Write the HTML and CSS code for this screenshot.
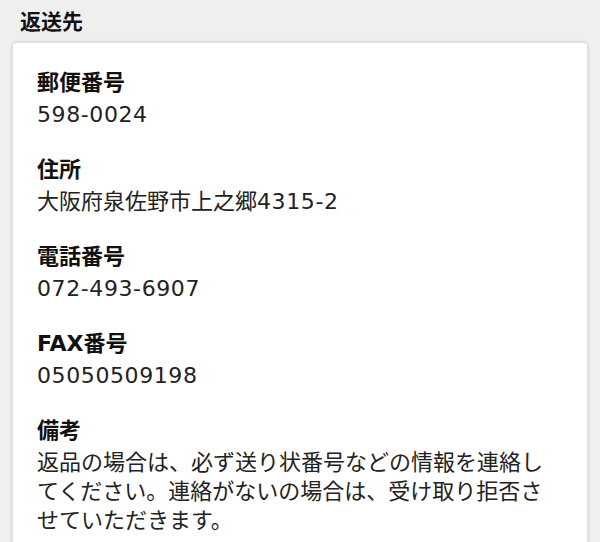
FILE: index.html
```html
<!DOCTYPE html>
<html lang="ja">
<head>
<meta charset="utf-8">
<link rel="stylesheet" href="styles.css">
</head>
<body>
<h2 class="title">返送先</h2>
<div class="card">
  <div class="item">
    <div class="label">郵便番号</div>
    <div class="value num">598-0024</div>
  </div>
  <div class="item">
    <div class="label">住所</div>
    <div class="value">大阪府泉佐野市上之郷<span class="num">4315-2</span></div>
  </div>
  <div class="item">
    <div class="label">電話番号</div>
    <div class="value num">072-493-6907</div>
  </div>
  <div class="item">
    <div class="label">FAX番号</div>
    <div class="value num">05050509198</div>
  </div>
  <div class="item">
    <div class="label">備考</div>
    <div class="value">返品の場合は、必ず送り状番号などの情報を連絡してください。連絡がないの場合は、受け取り拒否させていただきます。</div>
  </div>
</div>
</body>
</html>
```
FILE: styles.css
```css
html, body {
  margin: 0;
  padding: 0;
  background: #efefef;
  height: 100%;
  overflow: hidden;
}
body {
  font-family: "DejaVu Sans", "Noto Sans CJK JP", sans-serif;
  color: #111;
}
.title {
  margin: 0;
  padding: 8px 20px 0;
  font-size: 21px;
  font-weight: 700;
  line-height: 28px;
  height: 35px;
  color: #111;
}
.card {
  margin: 0 13px;
  background: #fff;
  border-radius: 4px;
  box-shadow: 0 0 4px rgba(0, 0, 0, 0.18);
  padding: 24px 24px 40px;
  display: flex;
  flex-direction: column;
  gap: 25px;
}
.label {
  font-size: 22px;
  font-weight: 700;
  line-height: 32px;
  margin-bottom: 1px;
  color: #111;
}
.value {
  font-size: 22px;
  line-height: 29px;
  color: #222;
}
.num {
  letter-spacing: 0.6px;
}
```
